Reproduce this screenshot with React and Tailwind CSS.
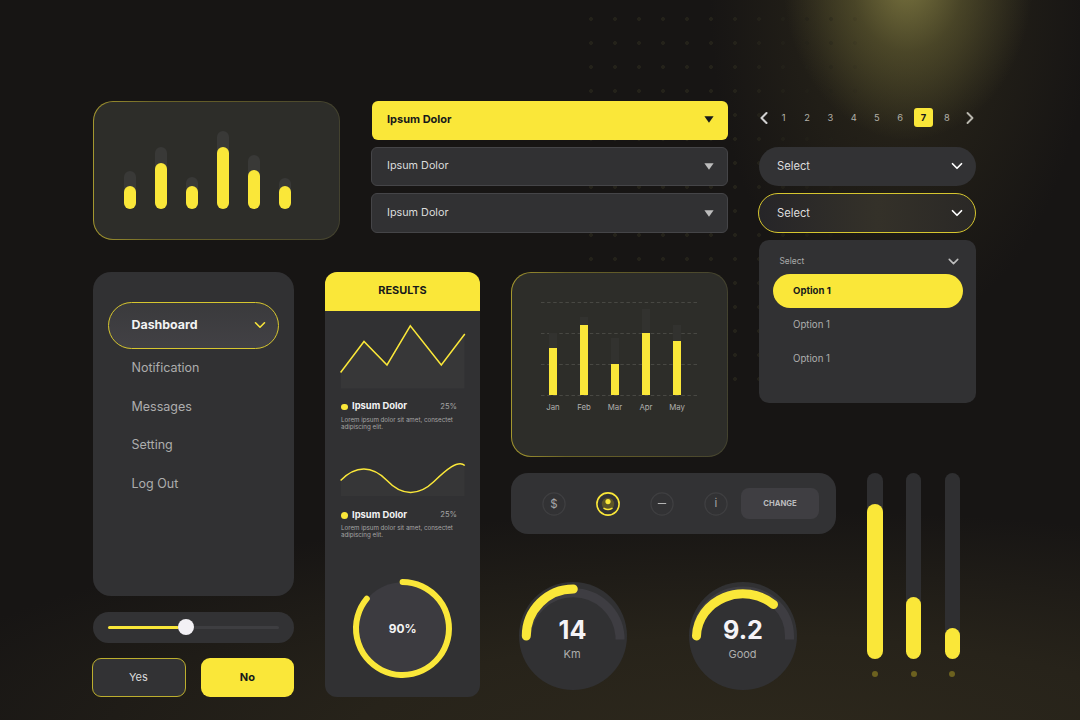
import { ChevronDown, ChevronLeft, ChevronRight } from "lucide-react";

const levels = [
  { value: 23, max: 38 },
  { value: 46, max: 62 },
  { value: 23, max: 32 },
  { value: 62, max: 78 },
  { value: 39, max: 54 },
  { value: 23, max: 31 },
];

const months = [
  { label: "Jan", value: 47, max: 62 },
  { label: "Feb", value: 70, max: 78 },
  { label: "Mar", value: 31, max: 57 },
  { label: "Apr", value: 62, max: 86 },
  { label: "May", value: 54, max: 70 },
];

const meters = [155, 62, 31];

function Backdrop() {
  return (
    <>
      <div className="absolute inset-0 bg-[radial-gradient(ellipse_900px_230px_at_760px_740px,#2d281c_0%,#27231a_45%,transparent_100%)]" />
      <div className="absolute inset-0 bg-[radial-gradient(ellipse_190px_330px_at_900px_0px,rgba(66,60,34,0.65)_0%,rgba(52,47,29,0.4)_45%,transparent_100%)]" />
      <div className="absolute inset-0 bg-[radial-gradient(ellipse_125px_160px_at_908px_-20px,rgba(135,129,70,0.8)_0%,rgba(104,99,52,0.5)_45%,transparent_100%)]" />
      <div className="absolute left-[579px] top-[7px] h-[384px] w-[288px] bg-[radial-gradient(circle_at_center,#24221a_0,#24221a_1.6px,transparent_2.2px)] bg-[size:24px_24px] [mask-image:linear-gradient(90deg,#000_60%,transparent)]" />
    </>
  );
}

function GlowCard({ className, children }) {
  return (
    <div
      className={`rounded-[20px] bg-[linear-gradient(90deg,#a4972f_0%,#6b6428_25%,#5c5629_60%,#43422f_100%)] p-[1.2px] ${className}`}
    >
      <div className="h-full w-full rounded-[19px] bg-[#2d2d29]">{children}</div>
    </div>
  );
}

function LevelsCard() {
  return (
    <GlowCard className="col-[1/4] row-[1/2]">
      <div className="flex h-full items-end gap-[18.5px] pb-[29.5px] pl-[29.5px]">
        {levels.map((level, i) => (
          <div
            key={i}
            className="flex w-[12.5px] items-end rounded-full bg-[#393937]"
            style={{ height: level.max }}
          >
            <div
              className="w-full rounded-full bg-[#fae739]"
              style={{ height: level.value }}
            />
          </div>
        ))}
      </div>
    </GlowCard>
  );
}

function Triangle({ className }) {
  return (
    <svg className={className} width="10" height="7" viewBox="0 0 10 7">
      <path d="M0.4 0.3h9.2L5 6.7z" fill="currentColor" />
    </svg>
  );
}

function Dropdowns() {
  return (
    <div className="col-[5/8] row-[1/2] flex flex-col gap-[7px] text-[10.8px]">
      <div className="-ml-[0.5px] flex h-[38.5px] items-center justify-between rounded-md bg-[#fae739] pb-[1.5px] pl-[15.5px] pr-[14px] text-[11px] font-bold text-[#17191b]">
        Ipsum Dolor
        <Triangle />
      </div>
      {[0, 1].map((i) => (
        <div
          key={i}
          className="-ml-px flex h-[39.8px] items-center justify-between rounded-md border border-[#454548] bg-[#313133] pl-[15px] pr-[13px] text-[#dcdcdc]"
        >
          Ipsum Dolor
          <Triangle className="text-[#bdbdbd]" />
        </div>
      ))}
    </div>
  );
}

function Pagination() {
  return (
    <div className="flex h-[34px] items-center text-[9.3px] text-[#b3b1a9]">
      <ChevronLeft className="-ml-[5.5px] size-5 shrink-0 text-[#d0d0d0]" strokeWidth={2.5} />
      <div className="ml-px flex gap-[4.8px]">
        {[1, 2, 3, 4, 5, 6, 7, 8].map((n) => (
          <span
            key={n}
            className={
              n === 7
                ? "flex h-[19px] w-[18.5px] items-center justify-center rounded-[3px] bg-[#fae739] font-bold text-[#17191b]"
                : "flex h-[19px] w-[18.5px] items-center justify-center"
            }
          >
            {n}
          </span>
        ))}
      </div>
      <ChevronRight className="ml-[3.5px] size-5 shrink-0 text-[#b9b7ae]" strokeWidth={2.3} />
    </div>
  );
}

function Selects() {
  return (
    <div className="col-[9/12] row-[1/4] flex flex-col">
      <Pagination />
      <div className="mt-[12.5px] flex h-[39px] items-center justify-between rounded-full bg-[#323234] pb-px pl-[18px] pr-[10px] text-[11.2px] text-[#dedede]">
        Select
        <ChevronDown className="size-[18px] text-white" strokeWidth={2.3} />
      </div>
      <div className="-ml-px mt-[7px] flex h-[40px] items-center justify-between rounded-full border border-[#d6c62f] bg-[linear-gradient(90deg,#262528_0%,#343129_55%,#2a2826_100%)] pl-[18px] pr-[9px] text-[11.2px] text-[#dedede]">
        Select
        <ChevronDown className="size-[18px] text-white" strokeWidth={2.3} />
      </div>
      <div className="mt-[7px] flex h-[163px] flex-col rounded-[10px] bg-[#313133]">
        <div className="mt-[12px] flex h-[18px] items-center justify-between pl-[20.5px] pr-[14.5px] text-[8.4px] text-[#a9a9a9]">
          Select
          <ChevronDown className="size-[17px] text-[#bdbdbd]" strokeWidth={2.2} />
        </div>
        <div className="ml-[13.5px] mt-[4px] flex h-[34px] w-[190px] items-center rounded-full bg-[#fae739] pl-[20.5px] text-[9.6px] font-bold text-[#17191b]">
          Option 1
        </div>
        <div className="flex h-[34px] items-center pl-[34px] text-[9.7px] text-[#adadad]">Option 1</div>
        <div className="flex h-[34px] items-center pl-[34px] text-[9.7px] text-[#adadad]">Option 1</div>
      </div>
    </div>
  );
}

function Sidebar() {
  return (
    <div className="col-[1/2] row-[3/7] flex flex-col">
      <div className="h-[324.5px] rounded-[18px] bg-[#313133] pt-[30px] text-[12.5px] text-[#adadad]">
        <div className="mb-[0.7px] ml-[15px] flex h-[47px] w-[171px] items-center justify-between rounded-full border border-[#d6c62f] bg-[linear-gradient(180deg,#3a3a3c,#424145)] pb-px pl-[22.5px] pr-[9px] text-[12.4px] font-bold text-[#f3f3f3]">
          <span className="pt-px">Dashboard</span>
          <ChevronDown className="size-[18px] text-[#fae739]" strokeWidth={2.1} />
        </div>
        {["Notification", "Messages", "Setting", "Log Out"].map((item) => (
          <div key={item} className="mb-[1.7px] flex h-[37px] items-center pl-[38.5px]">
            {item}
          </div>
        ))}
      </div>
      <div className="mt-4 flex h-[30.5px] items-center rounded-full bg-[#323234] px-[15px]">
        <div className="h-[3px] w-[71px] rounded-full bg-[#fae739]" />
        <div className="-ml-[1.5px] size-4 shrink-0 rounded-full bg-[#f3f1f5]" />
        <div className="h-[3px] flex-1 rounded-r-full bg-[#3e3e41]" />
      </div>
      <div className="-ml-[0.7px] mt-[15px] flex h-[39.5px] gap-[14.5px] text-[11px]">
        <div className="flex w-[94px] items-center justify-center rounded-[9px] border border-[#bcae2e] bg-[#323234] pb-px pr-[2px] text-[#dcdcdc]">
          Yes
        </div>
        <div className="flex flex-1 items-center justify-center rounded-[9px] bg-[#fae739] pb-px font-bold text-[#17191b]">
          No
        </div>
      </div>
    </div>
  );
}

function ResultItem() {
  return (
    <div className="h-[32px] px-4">
      <div className="flex h-3 items-center text-[9.4px]">
        <span className="mr-[4.5px] mt-px size-[6.5px] rounded-full bg-[#fae739]" />
        <span className="font-bold text-[#f3f3f3]">Ipsum Dolor</span>
        <span className="ml-auto mr-[7px] text-[7.6px] text-[#a5a5a5]">25%</span>
      </div>
      <p className="mt-[3.6px] whitespace-nowrap text-[6.2px] leading-[7.1px] text-[#a5a5a5]">
        Lorem ipsum dolor sit amet, consectet
        <br />
        adipiscing elit.
      </p>
    </div>
  );
}

function Results() {
  return (
    <div className="col-[3/6] row-[3/7] flex flex-col overflow-hidden rounded-[12px] bg-[#313133]">
      <div className="flex h-[38.5px] shrink-0 items-center justify-center bg-[#fae739] pb-[2px] text-[10.9px] font-bold text-[#17191b]">
        RESULTS
      </div>
      <svg className="shrink-0" width="155" height="90" viewBox="0 0 155 90">
        <path d="M16 61.5 39 30.5 62 54 85 15 116.5 54 139.5 23.5V77.5H16z" fill="#373738" />
        <path d="M15.6 61.5 39 30.5 62 54 85.3 14.8 116.3 54 139.8 23" fill="none" stroke="#fae739" strokeWidth="1.5" />
      </svg>
      <ResultItem />
      <svg className="mt-[10.3px] shrink-0" width="155" height="66" viewBox="0 0 155 66">
        <path d="M16 37.5C31 22 47 23 62 37.5C77 53 93 53 108 38.5C119 29 133 15 139.5 22V53H16z" fill="#363637" />
        <path d="M15.6 37.5C31 22 47 22.5 62 37.5C77 53.5 94 53 109 38.5C121 27 133 16.5 139.8 22.5" fill="none" stroke="#fae739" strokeWidth="1.5" />
      </svg>
      <ResultItem />
      <svg className="mt-[31.3px] shrink-0" width="155" height="110" viewBox="325 572 155 110">
        <circle cx="402.6" cy="628.3" r="46" fill="#3c3b40" />
        <path d="M402.6 582A46.5 46.5 0 1 1 366.8 598.7" fill="none" stroke="#fae739" strokeWidth="6" strokeLinecap="round" />
        <text x="402.6" y="632.6" textAnchor="middle" fill="#f3f3f3" fontSize="11.9" fontWeight="700">
          90%
        </text>
      </svg>
    </div>
  );
}

function MonthlyChart() {
  return (
    <GlowCard className="col-[7/8] row-[3/5] -ml-px">
      <div className="pl-[29.3px] pt-[28.8px]">
        <div className="relative h-[93px] w-[156px]">
          <svg className="absolute inset-0" width="156" height="94" viewBox="0 0 156 94">
            <path d="M0 .5h156M0 31.5h156M0 62.5h156M0 93.5h156" stroke="#484843" strokeWidth="1" strokeDasharray="3.5 2.6" />
          </svg>
          <div className="relative flex h-full items-end gap-[23px] pl-2">
            {months.map((month) => (
              <div
                key={month.label}
                className="flex w-2 items-end bg-[#32322f]"
                style={{ height: month.max }}
              >
                <div className="w-full bg-[#fae739]" style={{ height: month.value }} />
              </div>
            ))}
          </div>
        </div>
        <div className="mt-[7.2px] flex text-[7.8px] text-[#b0b0ad]">
          {months.map((month) => (
            <span key={month.label} className="-ml-[4px] mr-[4px] w-[31px] text-center">
              {month.label}
            </span>
          ))}
        </div>
      </div>
    </GlowCard>
  );
}

function ToolIcon({ children, active }) {
  return (
    <svg
      className={active ? "text-[#fae739]" : "text-[#3f3f41]"}
      width="24"
      height="24"
      viewBox="0 0 24 24"
      fill="none"
    >
      <circle cx="12" cy="12" r="11.1" stroke="currentColor" strokeWidth={active ? 1.6 : 1.3} />
      {children}
    </svg>
  );
}

function Toolbar() {
  return (
    <div className="-ml-px flex h-[61px] items-center rounded-[17px] bg-[#323234] pl-[30.5px]">
      <div className="flex gap-[30px]">
        <ToolIcon>
          <text x="12" y="15.5" textAnchor="middle" fill="#a7a7a7" fontSize="11.4">
            $
          </text>
        </ToolIcon>
        <ToolIcon active>
          <circle cx="12" cy="12" r="6.2" fill="#5c5527" />
          <circle cx="12" cy="9.6" r="2.6" fill="#fae739" />
          <path d="M8 16.3q4 2.5 8 0" stroke="#fae739" strokeWidth="1.5" strokeLinecap="round" />
        </ToolIcon>
        <ToolIcon>
          <path d="M7.8 11.5h8.4" stroke="#b4b4b4" strokeWidth="1" />
        </ToolIcon>
        <ToolIcon>
          <text x="12" y="15.2" textAnchor="middle" fill="#a7a7a7" fontSize="11.4">
            i
          </text>
        </ToolIcon>
      </div>
      <div className="ml-[13.5px] flex h-[31px] w-[78px] items-center justify-center rounded-lg bg-[#3f3e42] pt-px text-[7.7px] font-bold text-[#bcbcbe]">
        CHANGE
      </div>
    </div>
  );
}

function Gauge({ value, label, arc, track }) {
  return (
    <div className="relative size-[109px]">
      <svg className="absolute inset-0" width="109" height="109" viewBox="0 0 109 109" fill="none">
        <circle cx="54" cy="54" r="54" fill="#313133" />
        <path d={track} stroke="#3e3d42" strokeWidth="9" />
        <path d={arc} stroke="#fae739" strokeWidth="9" strokeLinecap="round" />
      </svg>
      <div className="relative flex flex-col items-center pt-[34.5px]">
        <span className="mr-px text-[25.2px] font-bold leading-[28px] text-[#f5f3f7]">{value}</span>
        <span className="mr-[2px] mt-[3px] text-[11px] leading-[15px] text-[#adadad]">{label}</span>
      </div>
    </div>
  );
}

function Controls() {
  return (
    <div className="col-[7/10] row-[6/7]">
      <Toolbar />
      <div className="ml-[6.5px] mt-[47.5px] flex gap-[61.5px]">
        <Gauge
          value="14"
          label="Km"
          track="M7.3 54A47 47 0 0 1 101 54V57.5"
          arc="M7.3 54A47 47 0 0 1 54.3 7"
        />
        <Gauge
          value="9.2"
          label="Good"
          track="M7.5 54A46.5 45 0 0 1 100.5 54V57.5"
          arc="M7.5 54A46.5 43.5 0 0 1 84.5 22.5"
        />
      </div>
    </div>
  );
}

function Meters() {
  return (
    <div className="col-[11/12] row-[6/7] flex gap-[23.3px]">
      {meters.map((height, i) => (
        <div key={i} className="flex flex-col items-center">
          <div className="flex h-[185.5px] w-[15.5px] items-end rounded-full bg-[#2f2f31]">
            <div className="w-full rounded-full bg-[#fae739]" style={{ height }} />
          </div>
          <div className="mt-[12.5px] size-[6px] rounded-full bg-[#6c611f]" />
        </div>
      ))}
    </div>
  );
}

export default function App() {
  return (
    <div className="relative h-[720px] w-[1080px] overflow-hidden bg-[#171514] font-['Inter',sans-serif]">
      <Backdrop />
      <div className="relative grid grid-cols-[201px_31px_15px_32px_108px_32px_216px_31px_77px_31px_109px] grid-rows-[139px_32px_131px_54px_16px_224px] pl-[93px] pt-[101px]">
        <LevelsCard />
        <Dropdowns />
        <Selects />
        <Sidebar />
        <Results />
        <MonthlyChart />
        <Controls />
        <Meters />
      </div>
    </div>
  );
}
